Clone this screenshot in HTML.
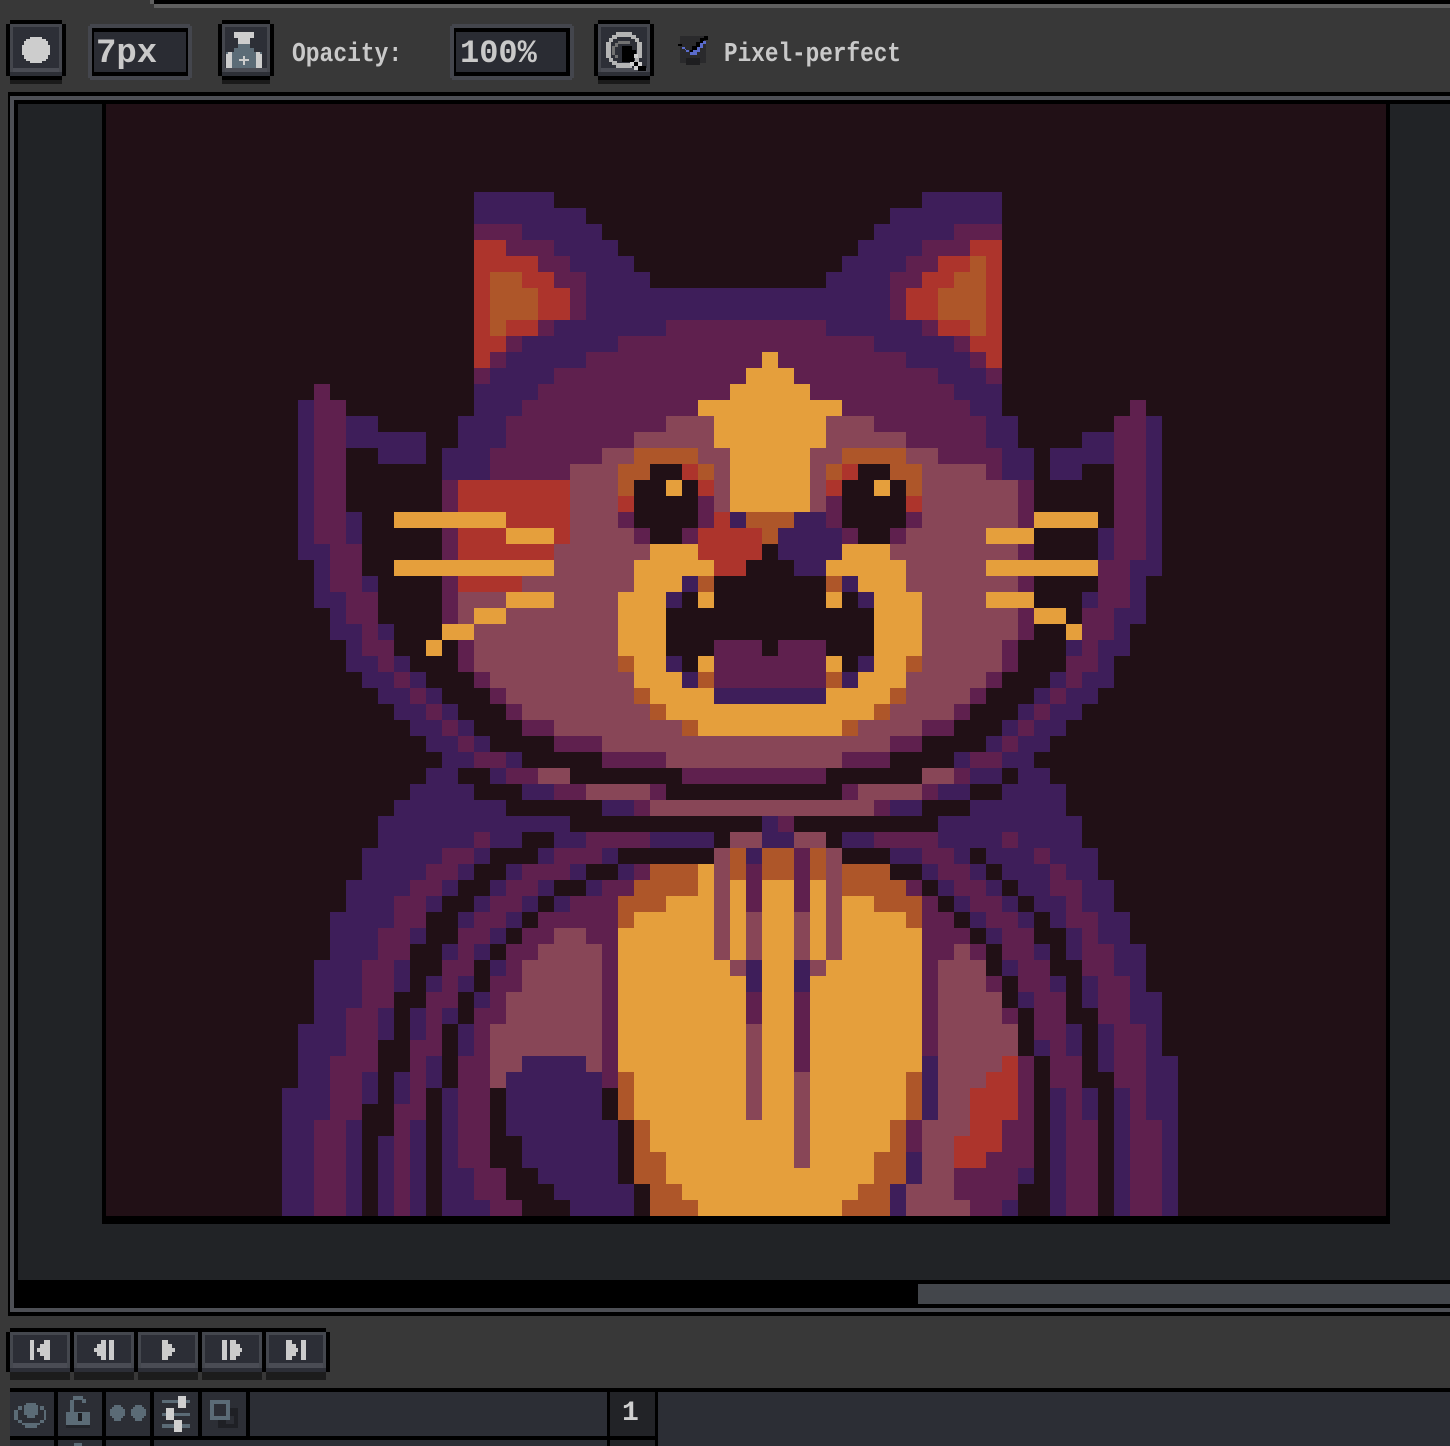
<!DOCTYPE html>
<html><head><meta charset="utf-8"><title>Pixel editor</title>
<style>
html,body{margin:0;padding:0;background:#383838;width:1450px;height:1446px;overflow:hidden}
div,span{position:absolute;display:block}
.t{font-family:"Liberation Mono",monospace;color:#c9c9c9;white-space:nowrap;transform-origin:0 0}
svg{position:absolute;left:0;top:0}
.P{stroke:#3e1e5a}.M{stroke:#5f204e}.R{stroke:#ad342c}.O{stroke:#ae5629}.Y{stroke:#e59f3c}.N{stroke:#884657}
</style></head><body>
<!-- top edge -->
<div style="left:150px;top:0;width:4px;height:4px;background:#5f5f5f"></div>
<div style="left:154px;top:0;width:1296px;height:4px;background:#000"></div>
<div style="left:154px;top:4px;width:1296px;height:4px;background:#5f5f5f"></div>

<!-- frame -->
<div style="left:8px;top:92px;width:1442px;height:1224px;background:#000"></div>
<div style="left:10px;top:96px;width:1440px;height:1216px;background:#4d4f55"></div>
<div style="left:14px;top:100px;width:1436px;height:1208px;background:#000"></div>
<div style="left:18px;top:104px;width:1432px;height:1176px;background:#212326"></div>
<div style="left:102px;top:100px;width:1288px;height:1124px;background:#000"></div>
<div style="left:106px;top:104px;width:1280px;height:1112px;background:#211016"></div>
<div style="left:918px;top:1284px;width:532px;height:20px;background:#43464b"></div>

<!-- pixel art -->
<svg width="1440" height="1440" viewBox="0 0 90 90" style="left:10px;top:0" shape-rendering="crispEdges" fill="none" stroke-width="1">
<path class=P d="M29 12.5H34M57 12.5H62M29 13.5H36M55 13.5H62"/>
<path class=M d="M29 14.5H32M59 14.5H62"/><path class=P d="M32 14.5H37M54 14.5H59"/>
<path class=R d="M29 15.5H31M60 15.5H62"/><path class=M d="M31 15.5H34M57 15.5H60"/><path class=P d="M34 15.5H38M53 15.5H57"/>
<path class=R d="M29 16.5H33M58 16.5H60M61 16.5H62"/><path class=M d="M33 16.5H35M56 16.5H58"/><path class=P d="M35 16.5H39M52 16.5H56"/><path class=O d="M60 16.5H61"/>
<path class=R d="M29 17.5H30M32 17.5H34M57 17.5H59M61 17.5H62"/><path class=O d="M30 17.5H32M59 17.5H61"/><path class=M d="M34 17.5H36M55 17.5H57"/><path class=P d="M36 17.5H40M51 17.5H55"/>
<path class=R d="M29 18.5H30M33 18.5H35M56 18.5H58M61 18.5H62M29 19.5H30M33 19.5H35M56 19.5H58M61 19.5H62"/><path class=O d="M30 18.5H33M58 18.5H61M30 19.5H33M58 19.5H61"/><path class=M d="M35 18.5H36M55 18.5H56M35 19.5H36M55 19.5H56"/><path class=P d="M36 18.5H55M36 19.5H55"/>
<path class=R d="M29 20.5H30M31 20.5H33M58 20.5H60M61 20.5H62"/><path class=O d="M30 20.5H31M60 20.5H61"/><path class=M d="M33 20.5H34M41 20.5H51M57 20.5H58"/><path class=P d="M34 20.5H41M51 20.5H57"/>
<path class=R d="M29 21.5H31M60 21.5H62"/><path class=M d="M31 21.5H32M38 21.5H54M59 21.5H60"/><path class=P d="M32 21.5H38M54 21.5H59"/>
<path class=R d="M29 22.5H30M61 22.5H62"/><path class=M d="M30 22.5H31M36 22.5H47M48 22.5H56M60 22.5H61"/><path class=P d="M31 22.5H36M56 22.5H60"/><path class=Y d="M47 22.5H48"/>
<path class=M d="M29 23.5H30M34 23.5H46M49 23.5H58M61 23.5H62"/><path class=P d="M30 23.5H34M58 23.5H61"/><path class=Y d="M46 23.5H49"/>
<path class=M d="M19 24.5H20M33 24.5H45M50 24.5H59"/><path class=P d="M29 24.5H33M59 24.5H62"/><path class=Y d="M45 24.5H50"/>
<path class=P d="M18 25.5H19M29 25.5H32M60 25.5H62"/><path class=M d="M19 25.5H21M32 25.5H43M52 25.5H60M70 25.5H71"/><path class=Y d="M43 25.5H52"/>
<path class=P d="M18 26.5H19M21 26.5H23M28 26.5H31M61 26.5H63M71 26.5H72"/><path class=M d="M19 26.5H21M31 26.5H41M54 26.5H61M69 26.5H71"/><path class=N d="M41 26.5H44M51 26.5H54"/><path class=Y d="M44 26.5H51"/>
<path class=P d="M18 27.5H19M21 27.5H26M28 27.5H31M61 27.5H63M67 27.5H69M71 27.5H72"/><path class=M d="M19 27.5H21M31 27.5H39M56 27.5H61M69 27.5H71"/><path class=N d="M39 27.5H44M51 27.5H56"/><path class=Y d="M44 27.5H51"/>
<path class=P d="M18 28.5H19M23 28.5H26M27 28.5H30M62 28.5H64M65 28.5H69M71 28.5H72"/><path class=M d="M19 28.5H21M30 28.5H37M58 28.5H62M69 28.5H71"/><path class=N d="M37 28.5H39M43 28.5H45M50 28.5H52M56 28.5H58"/><path class=O d="M39 28.5H43M52 28.5H56"/><path class=Y d="M45 28.5H50"/>
<path class=P d="M18 29.5H19M27 29.5H30M62 29.5H64M65 29.5H67M71 29.5H72"/><path class=M d="M19 29.5H21M30 29.5H35M61 29.5H62M69 29.5H71"/><path class=N d="M35 29.5H38M44 29.5H45M50 29.5H51M57 29.5H61"/><path class=O d="M38 29.5H40M43 29.5H44M51 29.5H52M55 29.5H57"/><path class=R d="M42 29.5H43M52 29.5H53"/><path class=Y d="M45 29.5H50"/>
<path class=P d="M18 30.5H19M71 30.5H72"/><path class=M d="M19 30.5H21M27 30.5H28M63 30.5H64M69 30.5H71"/><path class=R d="M28 30.5H35M43 30.5H44M51 30.5H52"/><path class=N d="M35 30.5H38M44 30.5H45M50 30.5H51M57 30.5H63"/><path class=O d="M38 30.5H39M56 30.5H57"/><path class=Y d="M41 30.5H42M45 30.5H50M54 30.5H55"/>
<path class=P d="M18 31.5H19M71 31.5H72"/><path class=M d="M19 31.5H21M27 31.5H28M43 31.5H44M51 31.5H52M63 31.5H64M69 31.5H71"/><path class=R d="M28 31.5H35M38 31.5H39M56 31.5H57"/><path class=N d="M35 31.5H38M44 31.5H45M50 31.5H51M57 31.5H63"/><path class=Y d="M45 31.5H50"/>
<path class=P d="M18 32.5H19M21 32.5H22M45 32.5H46M49 32.5H51M71 32.5H72"/><path class=M d="M19 32.5H21M38 32.5H39M43 32.5H44M51 32.5H52M56 32.5H57M63 32.5H64M69 32.5H71"/><path class=Y d="M24 32.5H31M64 32.5H68"/><path class=R d="M31 32.5H35M44 32.5H45"/><path class=N d="M35 32.5H38M57 32.5H63"/><path class=O d="M46 32.5H49"/>
<path class=P d="M18 33.5H19M21 33.5H22M48 33.5H52M68 33.5H69M71 33.5H72"/><path class=M d="M19 33.5H21M27 33.5H28M39 33.5H40M42 33.5H43M52 33.5H53M55 33.5H56M69 33.5H71"/><path class=R d="M28 33.5H31M34 33.5H35M43 33.5H47"/><path class=Y d="M31 33.5H34M61 33.5H64"/><path class=N d="M35 33.5H39M56 33.5H61"/><path class=O d="M47 33.5H48"/>
<path class=P d="M18 34.5H20M48 34.5H52M68 34.5H69M71 34.5H72"/><path class=M d="M20 34.5H22M27 34.5H28M63 34.5H64M69 34.5H71"/><path class=R d="M28 34.5H34M43 34.5H47"/><path class=N d="M34 34.5H40M55 34.5H63"/><path class=Y d="M40 34.5H43M52 34.5H55"/>
<path class=P d="M19 35.5H20M49 35.5H51M70 35.5H72"/><path class=M d="M20 35.5H22M68 35.5H70"/><path class=Y d="M24 35.5H34M39 35.5H44M51 35.5H56M61 35.5H68"/><path class=N d="M34 35.5H39M56 35.5H61"/><path class=R d="M44 35.5H46"/>
<path class=P d="M19 36.5H20M22 36.5H23M42 36.5H43M52 36.5H53M70 36.5H71"/><path class=M d="M20 36.5H22M27 36.5H28M63 36.5H64M68 36.5H70"/><path class=R d="M28 36.5H32"/><path class=N d="M32 36.5H39M56 36.5H63"/><path class=Y d="M39 36.5H42M53 36.5H56"/><path class=O d="M43 36.5H44M51 36.5H52"/>
<path class=P d="M19 37.5H21M41 37.5H42M53 37.5H54M67 37.5H68M70 37.5H71"/><path class=M d="M21 37.5H23M27 37.5H28M68 37.5H70"/><path class=N d="M28 37.5H31M34 37.5H38M57 37.5H61"/><path class=Y d="M31 37.5H34M38 37.5H41M43 37.5H44M51 37.5H52M54 37.5H57M61 37.5H64"/>
<path class=P d="M20 38.5H21M69 38.5H71"/><path class=M d="M21 38.5H23M27 38.5H28M63 38.5H64M67 38.5H69"/><path class=N d="M28 38.5H29M31 38.5H38M57 38.5H63"/><path class=Y d="M29 38.5H31M38 38.5H41M54 38.5H57M64 38.5H66"/>
<path class=P d="M20 39.5H22M23 39.5H24M69 39.5H70"/><path class=M d="M22 39.5H23M63 39.5H64M67 39.5H69"/><path class=Y d="M27 39.5H29M38 39.5H41M54 39.5H57M66 39.5H67"/><path class=N d="M29 39.5H38M57 39.5H63"/>
<path class=P d="M21 40.5H22M66 40.5H67M68 40.5H70"/><path class=M d="M22 40.5H24M28 40.5H29M44 40.5H47M48 40.5H51M62 40.5H63M67 40.5H68"/><path class=Y d="M26 40.5H27M38 40.5H41M54 40.5H57"/><path class=N d="M29 40.5H38M57 40.5H62"/>
<path class=P d="M21 41.5H23M24 41.5H25M41 41.5H42M53 41.5H54M68 41.5H69"/><path class=M d="M23 41.5H24M28 41.5H29M44 41.5H51M62 41.5H63M66 41.5H68"/><path class=N d="M29 41.5H38M57 41.5H62"/><path class=O d="M38 41.5H39M56 41.5H57"/><path class=Y d="M39 41.5H41M43 41.5H44M51 41.5H52M54 41.5H56"/>
<path class=P d="M22 42.5H24M25 42.5H26M42 42.5H43M52 42.5H53M65 42.5H66M67 42.5H69"/><path class=M d="M24 42.5H25M29 42.5H30M44 42.5H51M61 42.5H62M66 42.5H67"/><path class=N d="M30 42.5H39M56 42.5H61"/><path class=Y d="M39 42.5H42M53 42.5H56"/><path class=O d="M43 42.5H44M51 42.5H52"/>
<path class=P d="M23 43.5H25M26 43.5H27M44 43.5H51M64 43.5H65M66 43.5H68"/><path class=M d="M25 43.5H26M30 43.5H31M60 43.5H61M65 43.5H66"/><path class=N d="M31 43.5H39M56 43.5H60"/><path class=O d="M39 43.5H40M55 43.5H56"/><path class=Y d="M40 43.5H44M51 43.5H55"/>
<path class=P d="M24 44.5H26M27 44.5H28M63 44.5H64M65 44.5H67"/><path class=M d="M26 44.5H27M31 44.5H32M59 44.5H60M64 44.5H65"/><path class=N d="M32 44.5H40M55 44.5H59"/><path class=O d="M40 44.5H41M54 44.5H55"/><path class=Y d="M41 44.5H54"/>
<path class=P d="M25 45.5H27M28 45.5H29M62 45.5H63M64 45.5H66"/><path class=M d="M27 45.5H28M32 45.5H34M57 45.5H59M63 45.5H64"/><path class=N d="M34 45.5H42M53 45.5H57"/><path class=O d="M42 45.5H43M52 45.5H53"/><path class=Y d="M43 45.5H52"/>
<path class=P d="M26 46.5H28M29 46.5H30M61 46.5H62M63 46.5H65"/><path class=M d="M28 46.5H29M34 46.5H37M55 46.5H57M62 46.5H63"/><path class=N d="M37 46.5H55"/>
<path class=P d="M27 47.5H29M31 47.5H32M59 47.5H60M62 47.5H64"/><path class=M d="M29 47.5H31M37 47.5H41M52 47.5H55M60 47.5H62"/><path class=N d="M41 47.5H52"/>
<path class=P d="M26 48.5H28M30 48.5H31M60 48.5H62M63 48.5H65"/><path class=M d="M31 48.5H33M42 48.5H51M59 48.5H60"/><path class=N d="M33 48.5H35M57 48.5H59"/>
<path class=P d="M25 49.5H29M32 49.5H34M58 49.5H60M62 49.5H66"/><path class=M d="M34 49.5H36M40 49.5H41M52 49.5H53M57 49.5H58"/><path class=N d="M36 49.5H40M53 49.5H57"/>
<path class=P d="M24 50.5H31M37 50.5H39M55 50.5H57M60 50.5H66"/><path class=M d="M39 50.5H40M54 50.5H55"/><path class=N d="M40 50.5H54"/>
<path class=P d="M23 51.5H35M47 51.5H48M58 51.5H67"/><path class=M d="M48 51.5H49"/>
<path class=P d="M23 52.5H29M30 52.5H32M34 52.5H36M40 52.5H44M47 52.5H49M52 52.5H54M58 52.5H62M63 52.5H67"/><path class=M d="M29 52.5H30M36 52.5H40M54 52.5H58M62 52.5H63"/><path class=N d="M45 52.5H47M49 52.5H51"/>
<path class=P d="M22 53.5H27M29 53.5H30M33 53.5H34M37 53.5H38M46 53.5H47M55 53.5H57M59 53.5H60M61 53.5H64M65 53.5H68"/><path class=M d="M27 53.5H29M34 53.5H37M49 53.5H50M57 53.5H59M64 53.5H65"/><path class=N d="M44 53.5H45M51 53.5H52"/><path class=O d="M45 53.5H46M47 53.5H49M50 53.5H51"/>
<path class=P d="M22 54.5H26M28 54.5H29M31 54.5H32M35 54.5H36M38 54.5H39M57 54.5H58M60 54.5H61M62 54.5H65M66 54.5H68"/><path class=M d="M26 54.5H28M32 54.5H35M39 54.5H40M46 54.5H47M49 54.5H50M58 54.5H60M65 54.5H66"/><path class=O d="M40 54.5H43M45 54.5H46M47 54.5H49M50 54.5H51M52 54.5H55"/><path class=Y d="M43 54.5H44"/><path class=N d="M44 54.5H45M51 54.5H52"/>
<path class=P d="M21 55.5H25M27 55.5H28M30 55.5H31M33 55.5H34M36 55.5H37M58 55.5H59M61 55.5H62M63 55.5H65M67 55.5H69"/><path class=M d="M25 55.5H27M31 55.5H33M37 55.5H39M46 55.5H47M49 55.5H50M56 55.5H57M59 55.5H61M65 55.5H67"/><path class=O d="M39 55.5H43M52 55.5H56"/><path class=Y d="M43 55.5H44M45 55.5H46M47 55.5H49M50 55.5H51"/><path class=N d="M44 55.5H45M51 55.5H52"/>
<path class=P d="M21 56.5H24M26 56.5H27M29 56.5H30M32 56.5H33M34 56.5H35M59 56.5H60M62 56.5H63M64 56.5H66M67 56.5H69"/><path class=M d="M24 56.5H26M30 56.5H32M35 56.5H38M46 56.5H47M49 56.5H50M57 56.5H58M60 56.5H62M66 56.5H67"/><path class=O d="M38 56.5H41M54 56.5H57"/><path class=Y d="M41 56.5H44M45 56.5H46M47 56.5H49M50 56.5H51M52 56.5H54"/><path class=N d="M44 56.5H45M51 56.5H52"/>
<path class=P d="M20 57.5H24M28 57.5H29M31 57.5H32M60 57.5H61M63 57.5H64M65 57.5H66M68 57.5H70"/><path class=M d="M24 57.5H26M29 57.5H31M33 57.5H38M57 57.5H59M61 57.5H63M66 57.5H68"/><path class=O d="M38 57.5H39M56 57.5H57"/><path class=Y d="M39 57.5H44M45 57.5H46M47 57.5H49M50 57.5H51M52 57.5H56"/><path class=N d="M44 57.5H45M46 57.5H47M49 57.5H50M51 57.5H52"/>
<path class=P d="M20 58.5H23M25 58.5H26M30 58.5H31M61 58.5H62M66 58.5H67M68 58.5H70"/><path class=M d="M23 58.5H25M28 58.5H30M32 58.5H34M36 58.5H38M57 58.5H60M62 58.5H64M67 58.5H68"/><path class=N d="M34 58.5H36M44 58.5H45M46 58.5H47M49 58.5H50M51 58.5H52"/><path class=Y d="M38 58.5H44M45 58.5H46M47 58.5H49M50 58.5H51M52 58.5H57"/>
<path class=P d="M20 59.5H23M27 59.5H28M29 59.5H30M64 59.5H65M66 59.5H67M69 59.5H71"/><path class=M d="M23 59.5H25M28 59.5H29M31 59.5H33M37 59.5H38M57 59.5H59M60 59.5H61M62 59.5H64M67 59.5H69"/><path class=N d="M33 59.5H37M44 59.5H45M46 59.5H47M49 59.5H50M51 59.5H52M59 59.5H60"/><path class=Y d="M38 59.5H44M45 59.5H46M47 59.5H49M50 59.5H51M52 59.5H57"/>
<path class=P d="M19 60.5H22M24 60.5H25M30 60.5H31M46 60.5H47M49 60.5H50M62 60.5H63M69 60.5H71"/><path class=M d="M22 60.5H24M27 60.5H29M31 60.5H32M37 60.5H38M57 60.5H58M63 60.5H65M67 60.5H69"/><path class=N d="M32 60.5H37M45 60.5H46M50 60.5H51M58 60.5H61"/><path class=Y d="M38 60.5H45M47 60.5H49M51 60.5H57"/>
<path class=P d="M19 61.5H22M24 61.5H25M26 61.5H27M28 61.5H29M46 61.5H47M49 61.5H50M65 61.5H66M67 61.5H68M70 61.5H71"/><path class=M d="M22 61.5H24M27 61.5H28M30 61.5H32M37 61.5H38M57 61.5H58M61 61.5H62M63 61.5H65M68 61.5H70"/><path class=N d="M32 61.5H37M58 61.5H61"/><path class=Y d="M38 61.5H46M47 61.5H49M50 61.5H57"/>
<path class=P d="M19 62.5H22M29 62.5H30M63 62.5H64M67 62.5H68M70 62.5H72"/><path class=M d="M22 62.5H24M26 62.5H28M30 62.5H31M37 62.5H38M46 62.5H47M49 62.5H50M57 62.5H58M64 62.5H66M68 62.5H70"/><path class=N d="M31 62.5H37M58 62.5H62"/><path class=Y d="M38 62.5H46M47 62.5H49M50 62.5H57"/>
<path class=P d="M19 63.5H21M23 63.5H24M25 63.5H26M27 63.5H28M70 63.5H72"/><path class=M d="M21 63.5H23M26 63.5H27M29 63.5H31M37 63.5H38M46 63.5H47M49 63.5H50M57 63.5H58M62 63.5H63M64 63.5H66M68 63.5H70"/><path class=N d="M31 63.5H37M58 63.5H62"/><path class=Y d="M38 63.5H46M47 63.5H49M50 63.5H57"/>
<path class=P d="M18 64.5H21M23 64.5H24M25 64.5H26M28 64.5H29M66 64.5H67M68 64.5H69M71 64.5H72"/><path class=M d="M21 64.5H23M26 64.5H27M29 64.5H30M37 64.5H38M49 64.5H50M57 64.5H58M64 64.5H66M69 64.5H71"/><path class=N d="M30 64.5H37M46 64.5H47M58 64.5H63"/><path class=Y d="M38 64.5H46M47 64.5H49M50 64.5H57"/>
<path class=P d="M18 65.5H21M28 65.5H29M64 65.5H65M66 65.5H67M68 65.5H69M71 65.5H72"/><path class=M d="M21 65.5H23M25 65.5H27M29 65.5H30M37 65.5H38M49 65.5H50M57 65.5H58M65 65.5H66M69 65.5H71"/><path class=N d="M30 65.5H37M46 65.5H47M58 65.5H63"/><path class=Y d="M38 65.5H46M47 65.5H49M50 65.5H57"/>
<path class=P d="M18 66.5H20M26 66.5H27M32 66.5H36M57 66.5H58M68 66.5H69M71 66.5H73"/><path class=M d="M20 66.5H23M25 66.5H26M28 66.5H30M37 66.5H38M49 66.5H50M63 66.5H64M65 66.5H67M69 66.5H71"/><path class=N d="M30 66.5H32M36 66.5H37M46 66.5H47M58 66.5H62"/><path class=R d="M62 66.5H63"/><path class=Y d="M38 66.5H46M47 66.5H49M50 66.5H57"/>
<path class=P d="M18 67.5H20M22 67.5H23M24 67.5H25M26 67.5H27M31 67.5H37M57 67.5H58M71 67.5H73"/><path class=M d="M20 67.5H22M25 67.5H26M28 67.5H30M37 67.5H38M63 67.5H64M65 67.5H67M69 67.5H71"/><path class=N d="M30 67.5H31M46 67.5H47M49 67.5H50M58 67.5H61"/><path class=O d="M38 67.5H39M56 67.5H57"/><path class=R d="M61 67.5H63"/><path class=Y d="M39 67.5H46M47 67.5H49M50 67.5H56"/>
<path class=P d="M17 68.5H20M22 68.5H23M24 68.5H25M27 68.5H28M31 68.5H37M57 68.5H58M65 68.5H66M67 68.5H68M69 68.5H70M71 68.5H73"/><path class=M d="M20 68.5H22M25 68.5H26M28 68.5H30M63 68.5H64M66 68.5H67M70 68.5H71"/><path class=N d="M46 68.5H47M49 68.5H50M58 68.5H60"/><path class=O d="M38 68.5H39M56 68.5H57"/><path class=R d="M60 68.5H63"/><path class=Y d="M39 68.5H46M47 68.5H49M50 68.5H56"/>
<path class=P d="M17 69.5H20M27 69.5H28M31 69.5H37M57 69.5H58M65 69.5H66M67 69.5H68M69 69.5H70M71 69.5H73"/><path class=M d="M20 69.5H22M24 69.5H26M28 69.5H30M63 69.5H64M66 69.5H67M70 69.5H71"/><path class=N d="M46 69.5H47M49 69.5H50M58 69.5H60"/><path class=O d="M38 69.5H39M56 69.5H57"/><path class=R d="M60 69.5H63"/><path class=Y d="M39 69.5H46M47 69.5H49M50 69.5H56"/>
<path class=P d="M17 70.5H19M21 70.5H22M25 70.5H26M27 70.5H28M31 70.5H38M65 70.5H66M69 70.5H70M72 70.5H73"/><path class=M d="M19 70.5H21M24 70.5H25M28 70.5H30M56 70.5H57M62 70.5H64M66 70.5H68M70 70.5H72"/><path class=O d="M39 70.5H40M55 70.5H56"/><path class=Y d="M40 70.5H49M50 70.5H55"/><path class=N d="M49 70.5H50M57 70.5H60"/><path class=R d="M60 70.5H62"/>
<path class=P d="M17 71.5H19M21 71.5H22M23 71.5H24M25 71.5H26M27 71.5H28M32 71.5H38M65 71.5H66M69 71.5H70M72 71.5H73"/><path class=M d="M19 71.5H21M24 71.5H25M28 71.5H30M56 71.5H57M62 71.5H64M66 71.5H68M70 71.5H72"/><path class=O d="M39 71.5H40M55 71.5H56"/><path class=Y d="M40 71.5H49M50 71.5H55"/><path class=N d="M49 71.5H50M57 71.5H59"/><path class=R d="M59 71.5H62"/>
<path class=P d="M17 72.5H19M21 72.5H22M23 72.5H24M25 72.5H26M27 72.5H28M32 72.5H38M56 72.5H57M65 72.5H66M69 72.5H70M72 72.5H73"/><path class=M d="M19 72.5H21M24 72.5H25M28 72.5H30M61 72.5H64M66 72.5H68M70 72.5H72"/><path class=O d="M39 72.5H41M54 72.5H56"/><path class=Y d="M41 72.5H49M50 72.5H54"/><path class=N d="M49 72.5H50M57 72.5H59"/><path class=R d="M59 72.5H61"/>
<path class=P d="M17 73.5H19M21 73.5H22M23 73.5H24M25 73.5H26M27 73.5H29M33 73.5H38M56 73.5H57M63 73.5H64M65 73.5H66M69 73.5H70M72 73.5H73"/><path class=M d="M19 73.5H21M24 73.5H25M29 73.5H31M59 73.5H63M66 73.5H68M70 73.5H72"/><path class=O d="M39 73.5H41M54 73.5H56"/><path class=Y d="M41 73.5H54"/><path class=N d="M57 73.5H59"/>
<path class=P d="M17 74.5H19M21 74.5H22M23 74.5H24M25 74.5H26M27 74.5H29M34 74.5H39M55 74.5H56M65 74.5H66M69 74.5H70M72 74.5H73"/><path class=M d="M19 74.5H21M24 74.5H25M29 74.5H31M59 74.5H63M66 74.5H68M70 74.5H72"/><path class=O d="M40 74.5H42M53 74.5H55"/><path class=Y d="M42 74.5H53"/><path class=N d="M56 74.5H59"/>
<path class=P d="M17 75.5H19M21 75.5H22M23 75.5H24M25 75.5H26M27 75.5H30M35 75.5H39M55 75.5H56M62 75.5H63M65 75.5H66M69 75.5H70M72 75.5H73"/><path class=M d="M19 75.5H21M24 75.5H25M30 75.5H32M60 75.5H62M66 75.5H68M70 75.5H72"/><path class=O d="M40 75.5H43M52 75.5H55"/><path class=Y d="M43 75.5H52"/><path class=N d="M56 75.5H60"/>
</svg>

<!-- toolbar + animation + layer shapes -->
<svg width="1450" height="1446" viewBox="0 0 1450 1446" shape-rendering="crispEdges">
<!-- brush button -->
<path fill="#1a1a1a" d="M10 80h52v4H10z"/><path fill="#000" d="M10 20h52v4h4v52h-4v4H10v-4H6V24h4z"/>
<path fill="#44464d" d="M10 24h52v48H10z"/><path fill="#2d2f37" d="M13 27h46v41H13z"/><path fill="#4a4c54" d="M13 68h46v4H13z"/><path fill="#2d2f36" d="M10 72h52v4H10z"/>
<path fill="#cdcdcd" d="M30 37h12v2h4v2h2v4h2v10h-2v4h-2v2h-4v2H30v-2h-4v-2h-2v-4h-2V45h2v-4h2v-2h4z"/>
<!-- 7px input -->
<path fill="#44464d" d="M90 24h100v2h2v52h-2v2H90v-2h-2V26h2z"/><path fill="#000" d="M92 28h96v48H92z"/><path fill="#2a2c33" d="M94 32h92v40H94z"/>
<!-- ink button -->
<path fill="#1a1a1a" d="M222 80h48v4h-48z"/><path fill="#000" d="M222 20h48v4h4v52h-4v4h-48v-4h-4V24h4z"/>
<path fill="#44464d" d="M222 24h48v48h-48z"/><path fill="#2d2f37" d="M225 27h42v41h-42z"/><path fill="#4a4c54" d="M225 68h42v4h-42z"/><path fill="#2d2f36" d="M222 72h48v4h-48z"/>
<path fill="#cdcdcd" d="M234 32h20v6h-4v6h-12v-6h-4z"/>
<path fill="#5c6c77" d="M238 44h12v4h4v4h8v16h-36V52h8v-4h4z"/>
<path fill="#cdcdcd" d="M226 54h2v-2h4v16h-6zM256 52h4v2h2v14h-6zM243 56h2v3h4v2h-4v4h-2v-4h-4v-2h4z"/>
<!-- opacity input -->
<path fill="#44464d" d="M452 24h120v2h2v52h-2v2H452v-2h-2V26h2z"/><path fill="#000" d="M454 28h116v48H454z"/><path fill="#2a2c33" d="M456 32h110v40H456z"/>
<!-- shade button -->
<path fill="#1a1a1a" d="M598 80h52v4h-52z"/><path fill="#000" d="M598 20h52v4h4v52h-4v4h-52v-4h-4V24h4z"/>
<path fill="#44464d" d="M598 24h52v48h-52z"/><path fill="#2d2f37" d="M601 27h46v41h-46z"/><path fill="#4a4c54" d="M601 68h46v4h-46z"/><path fill="#2d2f36" d="M598 72h52v4h-52z"/>
<path fill="#b4b4b4" d="M616 32h16v3h4v3h3v4h3v16h-3v4h-3v3h-4v3h-16v-3h-4v-3h-3v-4h-3V42h3v-4h3v-3h4zM617 37v2h-4v3h-2v16h2v3h4v2h14v-2h4v-3h2V42h-2v-3h-4v-2z" fill-rule="evenodd"/>
<path fill="#727272" d="M618 41h12v3h-12v3h-3v8h3v3h-3v-3h-3v-9h3v-3h3z"/>
<path fill="#000" d="M622 46h10v4h4v8h-6v4h-8z"/>
<path fill="#000" d="M630 58h4v4h-4zM634 62h4v4h-4zM638 66h8v5h-8z"/>
<path fill="#cfcfcf" d="M634 54h4v4h-4zM630 62h4v4h-4zM638 62h4v4h-4zM634 66h4v4h-4z"/>
<!-- checkbox -->
<path fill="#2a2a2c" d="M680 36h26v27h-26z"/><path fill="#1e1e20" d="M686 58h14v7h-14z"/>
<path fill="#000" d="M678 46h8v4h4v4h6v-4h4v-6h4v-4h4v-4h-4v2h-4v4h-4v4h-4v4h-6v-4h-4v-2h-4z"/>
<path fill="#5a6bcb" d="M682 49h4v3h4v3h7v-3h3v-4h3v-4h3v-3h-3v2h-3v4h-3v3h-4v2h-4v-2h-4v-3h-3z"/>

<!-- animation buttons -->
<g fill="#1c1c1c"><path d="M10 1372h60v8H10zM74 1372h60v8H74zM138 1372h60v8h-60zM202 1372h60v8h-60zM266 1372h60v8h-60z"/></g>
<path fill="#000" d="M10 1328h316v4h4v40H6v-40h4z"/>
<g fill="#44474e"><path d="M10 1332h60v36H10zM74 1332h60v36H74zM138 1332h60v36h-60zM202 1332h60v36h-60zM266 1332h60v36h-60z"/></g>
<g fill="#2c2e36"><path d="M13 1335h54v28H13zM77 1335h54v28H77zM141 1335h54v28h-54zM205 1335h54v28h-54zM269 1335h54v28h-54z"/><path d="M10 1368h60v4H10zM74 1368h60v4H74zM138 1368h60v4h-60zM202 1368h60v4h-60zM266 1368h60v4h-60z"/></g>
<g fill="#4a4c54"><path d="M13 1363h54v5H13zM77 1363h54v5H77zM141 1363h54v5h-54zM205 1363h54v5h-54zM269 1363h54v5h-54z"/></g>
<g fill="#cbcbcb">
<path d="M30 1340h4v20h-4zM44 1340h6v20h-6zM40 1344h4v12h-4zM37 1348h3v4h-3z"/>
<path d="M109 1340h5v20h-5zM101 1340h5v20h-5zM97 1344h4v12h-4zM94 1348h3v4h-3z"/>
<path d="M162 1340h6v20h-6zM168 1344h4v12h-4zM172 1348h3v4h-3z"/>
<path d="M222 1340h5v20h-5zM230 1340h6v20h-6zM236 1344h4v12h-4zM240 1348h2v4h-2z"/>
<path d="M286 1340h6v20h-6zM292 1344h4v12h-4zM296 1348h2v4h-2zM301 1340h5v20h-5z"/>
</g>

<!-- layers -->
<path fill="#000" d="M10 1388h1440v4H10z"/>
<path fill="#2c2e35" d="M10 1392h1440v54H10z"/>
<path fill="#222327" d="M610 1392h45v54h-45z"/>
<path fill="#000" d="M10 1436h648v4H10zM54 1388h4v58h-4zM102 1388h4v58h-4zM150 1388h4v58h-4zM198 1388h4v48h-4zM246 1388h4v48h-4zM607 1388h3v58h-3zM655 1388h3v58h-3z"/>
<g fill="#5b6b76">
<!-- eye: dome + surrounding ring -->
<path d="M26 1403h10v2h2v10h-3v3h-8v-3h-3v-10h2z"/>
<path d="M18 1406h4v4h-4v10h4v3h18v-3h4v-10h-4v-4h4v4h2v10h-2v3h-4v2h-3v3H25v-3h-3v-2h-4v-3h-4v-10h4z"/>
<!-- lock -->
<path d="M66 1412h24v13H66zM70 1400h4v12h-4zM73 1396h10v4H73zM82 1399h4v4h-4z"/>
<!-- link -->
<path d="M114 1405h7v2h2v2h2v7h-2v2h-2v3h-7v-3h-2v-2h-2v-7h2v-2h2zM135 1405h7v2h2v2h2v7h-2v2h-2v3h-7v-3h-2v-2h-2v-7h2v-2h2z"/>
<!-- sliders -->
<path d="M162 1400h28v3h-28zM162 1413h28v3h-28zM162 1424h28v4h-28z"/>
</g>
<!-- square -->
<path fill="#1f2025" d="M218 1408h20v20h-20z"/><path fill="#2c2e35" d="M226 1416h8v8h-8z"/>
<path fill="#5b6b76" d="M210 1400h20v20h-20z"/><path fill="#2c2e35" d="M214 1404h12v12h-12z"/>
<path fill="#1b1c20" d="M78 1413h4v8h-4z"/><path fill="#23252b" d="M66 1425h24v3H66z"/>
<path fill="#d0d0d0" d="M178 1396h8v12h-8zM166 1408h8v12h-8zM174 1420h8v12h-8z"/>
<path fill="#5b6b76" d="M74 1443h8v3h-8z"/>
</svg>

<!-- text -->
<span class="t" style="left:96px;top:37px;font-size:34px;line-height:34px;font-weight:bold">7px</span>
<span class="t" style="left:460px;top:38px;font-size:32px;line-height:32px;font-weight:bold">100%</span>
<span class="t" style="left:292px;top:42px;font-size:27px;line-height:27px;font-weight:bold;transform:scaleX(.85)">Opacity:</span>
<span class="t" style="left:724px;top:42px;font-size:27px;line-height:27px;font-weight:bold;transform:scaleX(.84)">Pixel-perfect</span>
<span class="t" style="left:622px;top:1400px;font-size:28px;line-height:28px;font-weight:bold;color:#cfcfcf">1</span>
</body></html>
